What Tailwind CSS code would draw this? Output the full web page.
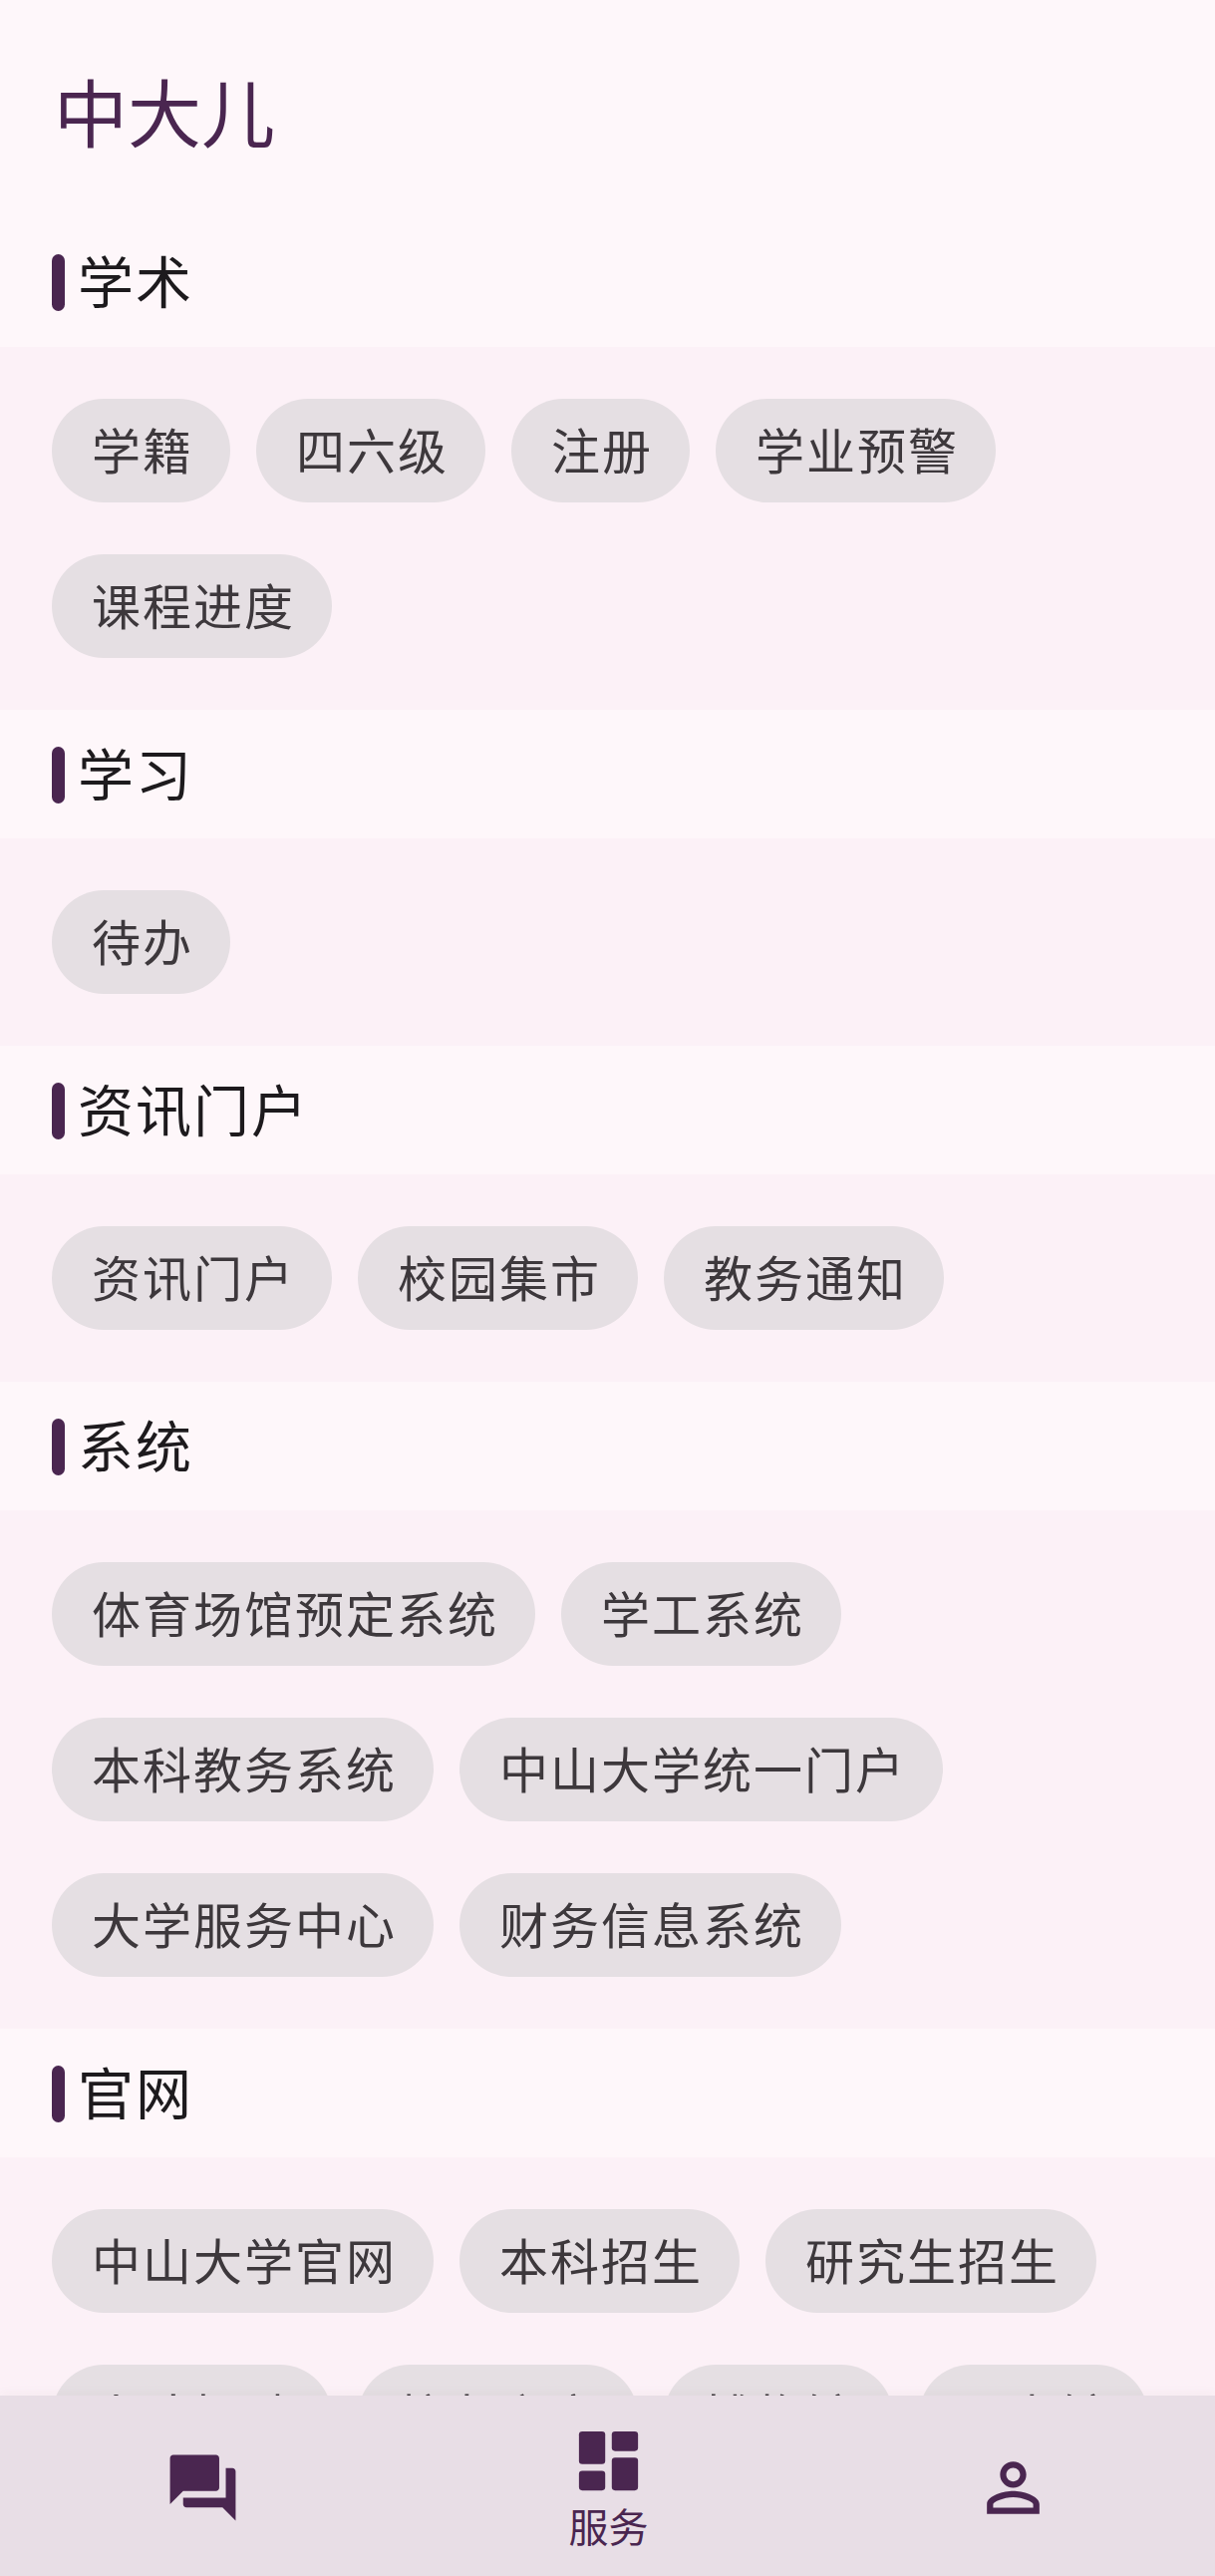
<!DOCTYPE html>
<html lang="zh-CN">
<head>
    <meta charset="UTF-8">
    <meta name="viewport" content="width=device-width, initial-scale=1.0">
    <title>中大儿</title>
    <script src="https://cdn.jsdelivr.net/npm/@tailwindcss/browser@4"></script>
</head>
<body class="bg-[#fef7fa] font-['Noto_Sans_CJK_SC',sans-serif]">
<div class="relative h-[2584px] w-[1219px] overflow-hidden">
    <h1 class="pl-[54px] pt-[61px] h-[225px] text-[74px] leading-[98px] text-[#4a2650]">中大儿</h1>

    <!-- 学术 -->
    <div class="flex h-[123px] items-start pl-[52px] pt-[30px] gap-[13px]">
        <div class="h-[57px] w-[13px] rounded-full bg-[#4a2650]"></div>
        <div class="text-[56px] leading-[50px] tracking-[2px] text-[#1d1a1d]">学术</div>
    </div>
    <div class="flex flex-wrap gap-x-[26px] gap-y-[52px] bg-[#fcf1f7] px-[52px] py-[52px]">
        <div class="h-[104px] rounded-full bg-[#e5dfe3] pl-[40px] pr-[37px] text-[49px] leading-[99px] tracking-[2px] text-[#3d383c]">学籍</div>
        <div class="h-[104px] rounded-full bg-[#e5dfe3] pl-[40px] pr-[37px] text-[49px] leading-[99px] tracking-[2px] text-[#3d383c]">四六级</div>
        <div class="h-[104px] rounded-full bg-[#e5dfe3] pl-[40px] pr-[37px] text-[49px] leading-[99px] tracking-[2px] text-[#3d383c]">注册</div>
        <div class="h-[104px] rounded-full bg-[#e5dfe3] pl-[40px] pr-[37px] text-[49px] leading-[99px] tracking-[2px] text-[#3d383c]">学业预警</div>
        <div class="h-[104px] rounded-full bg-[#e5dfe3] pl-[40px] pr-[37px] text-[49px] leading-[99px] tracking-[2px] text-[#3d383c]">课程进度</div>
    </div>

    <!-- 学习 -->
    <div class="flex h-[129px] items-start pl-[52px] pt-[37px] gap-[13px]">
        <div class="h-[57px] w-[13px] rounded-full bg-[#4a2650]"></div>
        <div class="text-[56px] leading-[50px] tracking-[2px] text-[#1d1a1d]">学习</div>
    </div>
    <div class="flex flex-wrap gap-x-[26px] gap-y-[52px] bg-[#fcf1f7] px-[52px] py-[52px]">
        <div class="h-[104px] rounded-full bg-[#e5dfe3] pl-[40px] pr-[37px] text-[49px] leading-[99px] tracking-[2px] text-[#3d383c]">待办</div>
    </div>

    <!-- 资讯门户 -->
    <div class="flex h-[129px] items-start pl-[52px] pt-[37px] gap-[13px]">
        <div class="h-[57px] w-[13px] rounded-full bg-[#4a2650]"></div>
        <div class="text-[56px] leading-[50px] tracking-[2px] text-[#1d1a1d]">资讯门户</div>
    </div>
    <div class="flex flex-wrap gap-x-[26px] gap-y-[52px] bg-[#fcf1f7] px-[52px] py-[52px]">
        <div class="h-[104px] rounded-full bg-[#e5dfe3] pl-[40px] pr-[37px] text-[49px] leading-[99px] tracking-[2px] text-[#3d383c]">资讯门户</div>
        <div class="h-[104px] rounded-full bg-[#e5dfe3] pl-[40px] pr-[37px] text-[49px] leading-[99px] tracking-[2px] text-[#3d383c]">校园集市</div>
        <div class="h-[104px] rounded-full bg-[#e5dfe3] pl-[40px] pr-[37px] text-[49px] leading-[99px] tracking-[2px] text-[#3d383c]">教务通知</div>
    </div>

    <!-- 系统 -->
    <div class="flex h-[129px] items-start pl-[52px] pt-[37px] gap-[13px]">
        <div class="h-[57px] w-[13px] rounded-full bg-[#4a2650]"></div>
        <div class="text-[56px] leading-[50px] tracking-[2px] text-[#1d1a1d]">系统</div>
    </div>
    <div class="flex flex-wrap gap-x-[26px] gap-y-[52px] bg-[#fcf1f7] px-[52px] py-[52px]">
        <div class="h-[104px] rounded-full bg-[#e5dfe3] pl-[40px] pr-[37px] text-[49px] leading-[99px] tracking-[2px] text-[#3d383c]">体育场馆预定系统</div>
        <div class="h-[104px] rounded-full bg-[#e5dfe3] pl-[40px] pr-[37px] text-[49px] leading-[99px] tracking-[2px] text-[#3d383c]">学工系统</div>
        <div class="h-[104px] rounded-full bg-[#e5dfe3] pl-[40px] pr-[37px] text-[49px] leading-[99px] tracking-[2px] text-[#3d383c]">本科教务系统</div>
        <div class="h-[104px] rounded-full bg-[#e5dfe3] pl-[40px] pr-[37px] text-[49px] leading-[99px] tracking-[2px] text-[#3d383c]">中山大学统一门户</div>
        <div class="h-[104px] rounded-full bg-[#e5dfe3] pl-[40px] pr-[37px] text-[49px] leading-[99px] tracking-[2px] text-[#3d383c]">大学服务中心</div>
        <div class="h-[104px] rounded-full bg-[#e5dfe3] pl-[40px] pr-[37px] text-[49px] leading-[99px] tracking-[2px] text-[#3d383c]">财务信息系统</div>
    </div>

    <!-- 官网 -->
    <div class="flex h-[129px] items-start pl-[52px] pt-[37px] gap-[13px]">
        <div class="h-[57px] w-[13px] rounded-full bg-[#4a2650]"></div>
        <div class="text-[56px] leading-[50px] tracking-[2px] text-[#1d1a1d]">官网</div>
    </div>
    <div class="flex flex-wrap gap-x-[26px] gap-y-[52px] bg-[#fcf1f7] px-[52px] py-[52px]">
        <div class="h-[104px] rounded-full bg-[#e5dfe3] pl-[40px] pr-[37px] text-[49px] leading-[99px] tracking-[2px] text-[#3d383c]">中山大学官网</div>
        <div class="h-[104px] rounded-full bg-[#e5dfe3] pl-[40px] pr-[37px] text-[49px] leading-[99px] tracking-[2px] text-[#3d383c]">本科招生</div>
        <div class="h-[104px] rounded-full bg-[#e5dfe3] pl-[40px] pr-[37px] text-[49px] leading-[99px] tracking-[2px] text-[#3d383c]">研究生招生</div>
        <div class="h-[104px] rounded-full bg-[#e5dfe3] pl-[40px] pr-[37px] text-[49px] leading-[99px] tracking-[2px] text-[#3d383c]">人才招聘</div>
        <div class="h-[104px] rounded-full bg-[#e5dfe3] pl-[40px] pr-[37px] text-[49px] leading-[99px] tracking-[2px] text-[#3d383c]">校友之家</div>
        <div class="h-[104px] rounded-full bg-[#e5dfe3] pl-[40px] pr-[37px] text-[49px] leading-[99px] tracking-[2px] text-[#3d383c]">博物馆</div>
        <div class="h-[104px] rounded-full bg-[#e5dfe3] pl-[40px] pr-[37px] text-[49px] leading-[99px] tracking-[2px] text-[#3d383c]">图书馆</div>
    </div>

    <!-- 底部导航 -->
    <nav class="absolute bottom-0 left-0 flex h-[181px] w-full bg-[#e8dee6] shadow-[0_-6px_8px_rgba(0,0,0,0.02)]">
        <div class="flex flex-1 items-center justify-center pt-[3px] pl-[1px]">
            <svg class="h-[79px] w-[79px] fill-[#4a2650]" viewBox="0 0 24 24"><path d="M21 6h-2v9H6v2c0 .55.45 1 1 1h11l4 4V7c0-.55-.45-1-1-1zm-4 6V3c0-.55-.45-1-1-1H3c-.55 0-1 .45-1 1v14l4-4h10c.55 0 1-.45 1-1z"/></svg>
        </div>
        <div class="flex flex-1 flex-col items-center justify-start pt-[26px] pl-[2px]">
            <svg class="h-[79px] w-[79px] fill-[#4a2650]" viewBox="0 0 24 24"><rect x="3" y="3" width="8" height="10" rx="1"/><rect x="3" y="15" width="8" height="6" rx="1"/><rect x="13" y="3" width="8" height="6" rx="1"/><rect x="13" y="11" width="8" height="10" rx="1"/></svg>
            <div class="pl-[1px] text-[40px] leading-[50px] text-[#4a2650]">服务</div>
        </div>
        <div class="flex flex-1 items-center justify-center pt-[3px] pl-[2px]">
            <svg class="h-[79px] w-[79px] fill-[#4a2650]" viewBox="0 0 24 24"><path d="M12 5.9c1.16 0 2.1.94 2.1 2.1s-.94 2.1-2.1 2.1S9.9 9.16 9.9 8s.94-2.1 2.1-2.1m0 9c2.97 0 6.1 1.46 6.1 2.1v1.1H5.9V17c0-.64 3.13-2.1 6.1-2.1M12 4C9.79 4 8 5.79 8 8s1.79 4 4 4 4-1.79 4-4-1.79-4-4-4zm0 9c-2.67 0-8 1.34-8 4v3h16v-3c0-2.66-5.33-4-8-4z"/></svg>
        </div>
    </nav>
</div>
</body>
</html>
